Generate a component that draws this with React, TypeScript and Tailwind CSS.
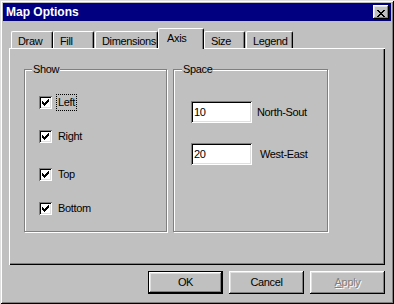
import React from 'react';

const raised =
  'shadow-[inset_-1px_-1px_0_#000,inset_1px_1px_0_#fff,inset_-2px_-2px_0_#808080,inset_2px_2px_0_#dfdfdf]';
const sunken =
  'shadow-[inset_1px_1px_0_#808080,inset_-1px_-1px_0_#fff,inset_2px_2px_0_#000,inset_-2px_-2px_0_#dfdfdf]';

const tabs = [
  { label: 'Draw', w: 'w-[42px]', ml: '' },
  { label: 'Fill', w: 'w-[41px]', ml: '' },
  { label: 'Dimensions', w: 'w-[63px]', ml: 'ml-[1px]' },
  { label: 'Axis', w: 'w-[46px]', ml: '', active: true },
  { label: 'Size', w: 'w-[41px]', ml: '' },
  { label: 'Legend', w: 'w-[47px]', ml: 'ml-[1px]' },
];

const checks = [
  { label: 'Left', mt: 'mt-[26px]', focus: true },
  { label: 'Right', mt: 'mt-[21px]' },
  { label: 'Top', mt: 'mt-[25px]' },
  { label: 'Bottom', mt: 'mt-[21px]' },
];

const CheckMark = () => (
  <svg width="7" height="7" viewBox="0 0 7 7" shapeRendering="crispEdges">
    <path
      d="M6 0h1v1H6zM5 1h2v1H5zM0 2h1v1H0zM4 2h3v1H4zM0 3h2v1H0zM3 3h3v1H3zM0 4h5v1H0zM1 5h3v1H1zM2 6h1v1H2z"
      fill="#000"
    />
  </svg>
);

const CloseGlyph = () => (
  <svg width="8" height="7" viewBox="0 0 8 7" shapeRendering="crispEdges">
    <path
      d="M0 0h2v1H0zM6 0h2v1H6zM1 1h2v1H1zM5 1h2v1H5zM2 2h4v1H2zM3 3h2v1H3zM2 4h4v1H2zM1 5h2v1H1zM5 5h2v1H5zM0 6h2v1H0zM6 6h2v1H6z"
      fill="#000"
    />
  </svg>
);

const GroupBox = ({ title, titleLeft, width, children }: { title: string; titleLeft: string; width: string; children: React.ReactNode }) => (
  <div className={`relative ${width} h-[163px] border border-[#808080] shadow-[inset_1px_1px_0_#fff,1px_1px_0_#fff]`}>
    <span className={`absolute -top-[7px] ${titleLeft} px-[1px] bg-[#c0c0c0] leading-[13px]`}>{title}</span>
    {children}
  </div>
);

export default function App() {
  return (
    <div className="w-[394px] h-[304px] bg-[#c0c0c0] p-[3px] flex flex-col text-[11px] tracking-[-0.35px] text-black font-['Liberation_Sans',Arial,sans-serif] shadow-[inset_1px_1px_0_#dfdfdf,inset_-1px_-1px_0_#000,inset_2px_2px_0_#fff,inset_-2px_-2px_0_#808080]">
      {/* title bar */}
      <div className="h-[18px] bg-[#000080] flex items-center justify-between pl-[3px] pr-[2px]">
        <span className="text-white font-bold text-[12px] tracking-normal leading-[18px]">Map Options</span>
        <button className={`w-[16px] h-[14px] bg-[#c0c0c0] ${raised} pl-[4px] pt-[3px]`}>
          <CloseGlyph />
        </button>
      </div>

      <div className="px-[6px] flex flex-col">
        {/* tabs */}
        <div className="mt-[7px] h-[20px] flex items-end pl-[2px]">
          {tabs.map((t) =>
            t.active ? (
              <div
                key={t.label}
                className={`relative z-10 ${t.w} h-[21px] -mb-[1px] bg-[#c0c0c0] border-t border-l border-white border-r border-r-black rounded-t-[2px] shadow-[inset_-1px_0_0_#808080] pl-[8px] pt-[3px] leading-[13px]`}
              >
                {t.label}
              </div>
            ) : (
              <div
                key={t.label}
                className={`${t.ml} ${t.w} h-[17px] bg-[#c0c0c0] border-t border-l border-white border-r border-r-black rounded-t-[2px] shadow-[inset_-1px_0_0_#808080] pl-[6px] pt-[3px] leading-[13px] whitespace-nowrap overflow-hidden`}
              >
                {t.label}
              </div>
            )
          )}
        </div>

        {/* tab panel */}
        <div className="h-[217px] flex pl-[15px] pt-[21px] shadow-[inset_1px_1px_0_#fff,inset_-1px_-1px_0_#000,inset_-2px_-2px_0_#808080]">
          <GroupBox title="Show" titleLeft="left-[7px]" width="w-[143px]">
            <div className="flex flex-col pl-[14px]">
              {checks.map((c) => (
                <div key={c.label} className={`${c.mt} h-[13px] flex items-center`}>
                  <div className={`w-[13px] h-[13px] bg-white ${sunken} flex items-center justify-center`}>
                    <CheckMark />
                  </div>
                  <span
                    className={`ml-[5px] px-[1px] leading-[15px] ${
                      c.focus ? 'outline outline-1 outline-dotted outline-black' : ''
                    }`}
                  >
                    {c.label}
                  </span>
                </div>
              ))}
            </div>
          </GroupBox>

          <div className="ml-[6px]">
            <GroupBox title="Space" titleLeft="left-[8px]" width="w-[155px]">
              <div className="flex flex-col pl-[17px]">
                <div className="mt-[31px] flex items-center">
                  <div className={`w-[61px] h-[22px] bg-white ${sunken} pl-[3px] leading-[22px]`}>10</div>
                  <span className="ml-[5px]">North-Sout</span>
                </div>
                <div className="mt-[20px] flex items-center">
                  <div className={`w-[61px] h-[22px] bg-white ${sunken} pl-[3px] leading-[22px]`}>20</div>
                  <span className="ml-[8px]">West-East</span>
                </div>
              </div>
            </GroupBox>
          </div>
        </div>

        {/* buttons */}
        <div className="mt-[6px] flex justify-end gap-[6px]">
          <button className="w-[75px] h-[23px] bg-[#c0c0c0] flex items-center justify-center shadow-[inset_0_0_0_1px_#000,inset_-2px_-2px_0_#000,inset_2px_2px_0_#fff,inset_-3px_-3px_0_#808080,inset_3px_3px_0_#dfdfdf]">
            OK
          </button>
          <button className={`w-[75px] h-[23px] bg-[#c0c0c0] flex items-center justify-center ${raised}`}>
            Cancel
          </button>
          <button
            disabled
            className={`w-[75px] h-[23px] bg-[#c0c0c0] flex items-center justify-center ${raised} text-[#808080] [text-shadow:1px_1px_0_#fff]`}
          >
            <span className="underline">A</span>pply
          </button>
        </div>
      </div>
    </div>
  );
}
